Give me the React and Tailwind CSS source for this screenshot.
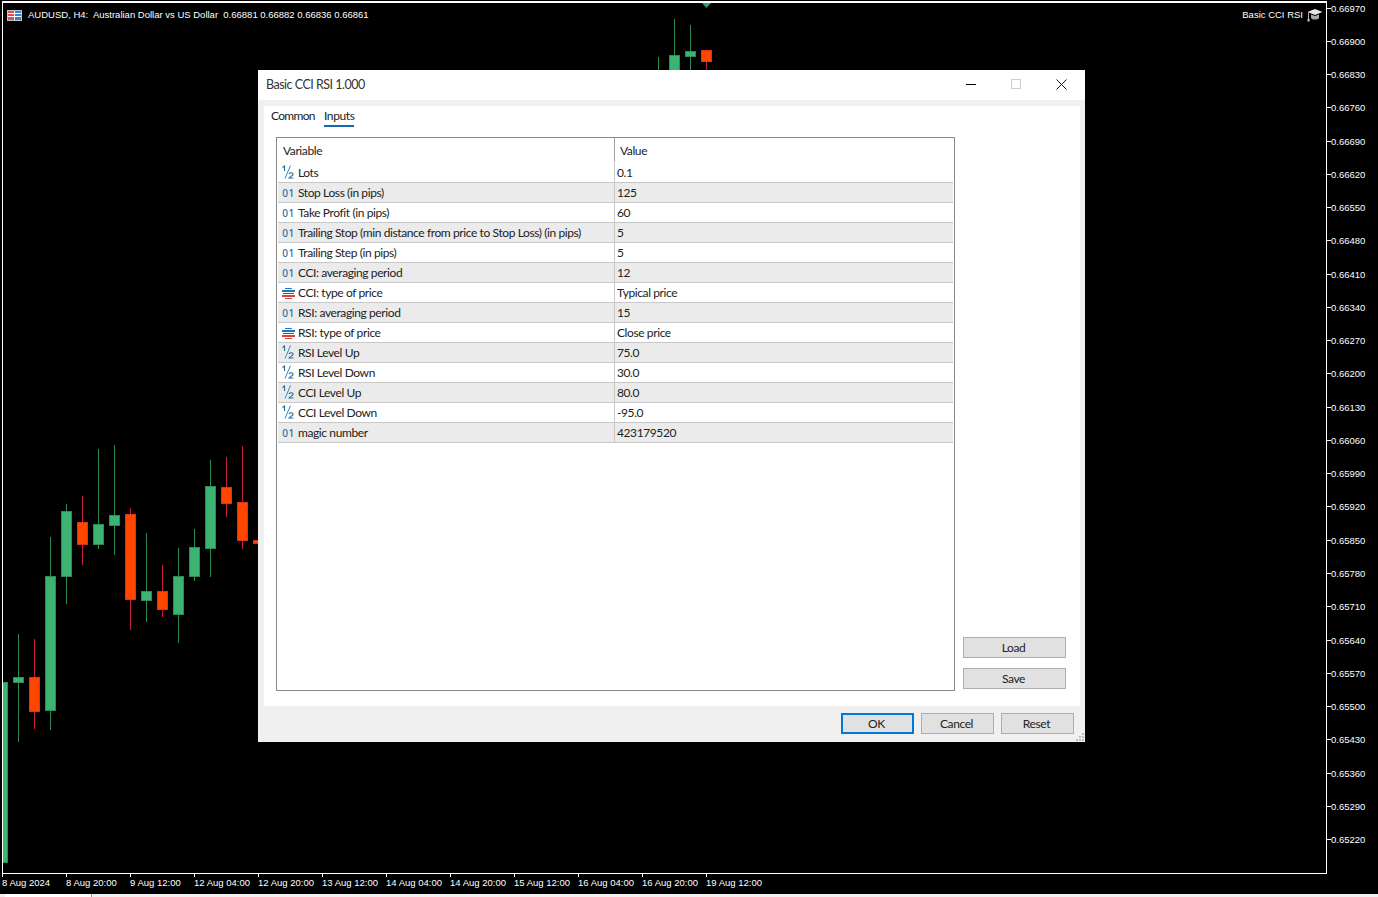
import React from "react";

const candles = [
    { x: 2.5, hi: 682, lo: 862, top: 682, bot: 862, up: true },
    { x: 18.5, hi: 634, lo: 742, top: 677, bot: 682, up: true },
    { x: 34.5, hi: 639, lo: 729, top: 677, bot: 711, up: false },
    { x: 50.5, hi: 537, lo: 730, top: 576, bot: 710, up: true },
    { x: 66.5, hi: 504, lo: 604, top: 511, bot: 576, up: true },
    { x: 82.5, hi: 496, lo: 565, top: 522, bot: 544, up: false },
    { x: 98.5, hi: 449, lo: 549, top: 524, bot: 544, up: true },
    { x: 114.5, hi: 445, lo: 555, top: 515, bot: 525, up: true },
    { x: 130.5, hi: 508, lo: 630, top: 514, bot: 599, up: false },
    { x: 146.5, hi: 533, lo: 622, top: 591, bot: 600, up: true },
    { x: 162.5, hi: 565, lo: 617, top: 591, bot: 609, up: false },
    { x: 178.5, hi: 548, lo: 643, top: 576, bot: 614, up: true },
    { x: 194.5, hi: 529, lo: 581, top: 547, bot: 576, up: true },
    { x: 210.5, hi: 460, lo: 577, top: 486, bot: 548, up: true },
    { x: 226.5, hi: 457, lo: 517, top: 487, bot: 503, up: false },
    { x: 242.5, hi: 446, lo: 549, top: 502, bot: 540, up: false },
    { x: 258.5, hi: 540, lo: 543, top: 540, bot: 543, up: false },
    { x: 658.5, hi: 57, lo: 80, top: 80, bot: 80, up: true },
    { x: 674.5, hi: 19, lo: 80, top: 55, bot: 80, up: true },
    { x: 690.5, hi: 25, lo: 80, top: 51, bot: 56, up: true },
    { x: 706.5, hi: 50, lo: 80, top: 50, bot: 61, up: false },
];

const prices = [
    "0.66970", "0.66900", "0.66830", "0.66760", "0.66690", "0.66620", "0.66550",
    "0.66480", "0.66410", "0.66340", "0.66270", "0.66200", "0.66130", "0.66060",
    "0.65990", "0.65920", "0.65850", "0.65780", "0.65710", "0.65640", "0.65570",
    "0.65500", "0.65430", "0.65360", "0.65290", "0.65220",
];

const times = [
    "8 Aug 2024", "8 Aug 20:00", "9 Aug 12:00", "12 Aug 04:00", "12 Aug 20:00",
    "13 Aug 12:00", "14 Aug 04:00", "14 Aug 20:00", "15 Aug 12:00", "16 Aug 04:00",
    "16 Aug 20:00", "19 Aug 12:00",
];

const inputs = [
    { type: "real", name: "Lots", value: "0.1" },
    { type: "int", name: "Stop Loss (in pips)", value: "125" },
    { type: "int", name: "Take Profit (in pips)", value: "60" },
    { type: "int", name: "Trailing Stop (min distance from price to Stop Loss) (in pips)", value: "5" },
    { type: "int", name: "Trailing Step (in pips)", value: "5" },
    { type: "int", name: "CCI: averaging period", value: "12" },
    { type: "enum", name: "CCI: type of price", value: "Typical price" },
    { type: "int", name: "RSI: averaging period", value: "15" },
    { type: "enum", name: "RSI: type of price", value: "Close price" },
    { type: "real", name: "RSI Level Up", value: "75.0" },
    { type: "real", name: "RSI Level Down", value: "30.0" },
    { type: "real", name: "CCI Level Up", value: "80.0" },
    { type: "real", name: "CCI Level Down", value: "-95.0" },
    { type: "int", name: "magic number", value: "423179520" },
];

function CandleChart() {
    return (
        <svg className="absolute left-[-3px] top-[-3px]" width="1378" height="897">
            {candles.map((c) => (
                <g key={c.x}>
                    <line
                        x1={c.x}
                        x2={c.x}
                        y1={c.hi}
                        y2={c.lo}
                        stroke={c.up ? "#2e8b57" : "#c41e3a"}
                    />
                    {c.bot > c.top && (
                        <rect
                            x={c.x - 5}
                            y={c.top + 0.5}
                            width="10"
                            height={c.bot - c.top}
                            fill={c.up ? "#3cb371" : "#ff4500"}
                            stroke={c.up ? "#2e8b57" : "#e0301e"}
                        />
                    )}
                </g>
            ))}
            <polygon points="702,3 711,3 706.5,8" fill="#2a9d8f" />
        </svg>
    );
}

function SymbolIcon() {
    return (
        <svg width="15" height="11" viewBox="0 0 15 11">
            <rect x="0.5" y="0.5" width="14" height="10" fill="#fff" stroke="#b9c4d6" />
            <rect x="1" y="1" width="6" height="2" fill="#e2504a" />
            <rect x="1" y="4" width="6" height="2" fill="#e2504a" />
            <rect x="1" y="7" width="6" height="3" fill="#e2504a" />
            <rect x="8" y="1" width="6" height="2" fill="#3f7fc4" />
            <rect x="8" y="4" width="6" height="2" fill="#3f7fc4" />
            <rect x="8" y="7" width="6" height="3" fill="#3f7fc4" />
        </svg>
    );
}

function CapIcon() {
    return (
        <svg width="16" height="14" viewBox="0 0 16 14">
            <path d="M8 1 L15.5 4 L8 7 L0.5 4 Z" fill="#e6e6e6" />
            <path d="M4 6.5 L8 8 L12 6.5 V10 C10.5 12 5.5 12 4 10 Z" fill="#a8a8a8" />
            <path d="M1.5 4.5 V11" stroke="#b5b5b5" />
            <rect x="0.5" y="11" width="2" height="2.5" fill="#cfcfcf" />
        </svg>
    );
}

function TypeIcon({ type }) {
    if (type === "int") {
        return (
            <span className="w-[13px] text-center font-['Noto_Sans',sans-serif] text-[10px] font-medium leading-none tracking-[0.6px] text-[#1f6f9f]">01</span>
        );
    }
    if (type === "real") {
        return (
            <svg width="13" height="14" viewBox="0 0 13 14" className="mt-[-2px]">
                <path d="M0.5 2.5 L2.5 1 V6" fill="none" stroke="#1f6f9f" strokeWidth="1.1" />
                <path d="M8.5 0.5 L3 13.5" fill="none" stroke="#3f86b0" strokeWidth="1" />
                <path d="M7 9 C8 7.2 11.5 7.5 11 9.5 C10.5 11 8 11.5 7 13 H11.5" fill="none" stroke="#1f6f9f" strokeWidth="1.1" />
            </svg>
        );
    }
    return (
        <svg width="13" height="11" viewBox="0 0 13 11" shapeRendering="crispEdges">
            <rect x="3" y="0" width="7" height="1" fill="#1f78c0" />
            <rect x="0" y="2" width="13" height="2" fill="#1f78c0" />
            <rect x="1" y="5" width="11" height="1" fill="#555555" />
            <rect x="0" y="7" width="13" height="2" fill="#d8403c" />
            <rect x="3" y="10" width="7" height="1" fill="#d8403c" />
        </svg>
    );
}

function DialogButton({ children, primary, className }) {
    return (
        <button
            className={`flex h-[21px] items-center justify-center bg-[#e1e1e1] pr-0.5 pt-px ${
                primary ? "border-2 border-[#0078d7]" : "border border-[#adadad]"
            } ${className}`}
        >
            {children}
        </button>
    );
}

function InputRow({ row, index }) {
    return (
        <div
            className={`flex h-5 border-b border-[#c8c8c8] ${
                index % 2 === 1 ? "bg-[#ebebeb]" : "bg-white"
            }`}
        >
            <div className="flex w-[337px] items-center border-r border-[#c8c8c8] pl-1 pt-px">
                <TypeIcon type={row.type} />
                <span className="ml-[3px] whitespace-nowrap">{row.name}</span>
            </div>
            <div className="flex items-center pl-[2px] pt-px">{row.value}</div>
        </div>
    );
}

function SettingsDialog() {
    return (
        <div className="absolute left-[258px] top-[70px] flex h-[672px] w-[827px] flex-col bg-[#f0f0f0] font-['Lato',sans-serif] text-[12px] tracking-[-0.4px] text-[#222]">
            {/* Title bar */}
            <div className="flex h-[30px] items-center bg-white pl-2">
                <span className="flex-1 text-[12.5px] tracking-[-0.5px] text-[#333]">Basic CCI RSI 1.000</span>
                <div className="mb-0.5 flex h-full w-[46px] items-center justify-center">
                    <div className="h-px w-[10px] bg-black" />
                </div>
                <div className="mb-0.5 flex h-full w-[44px] items-center justify-center">
                    <div className="h-[10px] w-[10px] border border-[#cccccc]" />
                </div>
                <div className="mb-0.5 flex h-full w-[47px] items-center justify-center">
                    <svg width="11" height="11" viewBox="0 0 11 11">
                        <path d="M0.5 0.5 L10.5 10.5 M10.5 0.5 L0.5 10.5" stroke="#111" fill="none" />
                    </svg>
                </div>
            </div>

            {/* Main panel */}
            <div className="ml-1.5 mr-[5px] mt-1.5 flex h-[600px] bg-white pb-[15px] pl-3 pr-3.5">
                <div className="flex w-[679px] flex-col">
                    <div className="flex h-[31px] pt-px">
                        <span className="-ml-[5px] h-5 w-[53px] leading-[17px] tracking-[-0.7px]">Common</span>
                        <span className="h-5 border-b-2 border-[#0f6cab] leading-[17px]">Inputs</span>
                    </div>
                    <div className="flex-1 border border-[#8a8a8a] px-px">
                        <div className="flex h-6 items-center bg-white">
                            <div className="flex h-full w-[337px] items-center border-r border-[#a0a0a0] pl-[5px] pt-px">Variable</div>
                            <div className="pl-[5px] pt-px">Value</div>
                        </div>
                        <div className="mt-px">
                            {inputs.map((row, index) => (
                                <InputRow key={row.name} row={row} index={index} />
                            ))}
                        </div>
                    </div>
                </div>
                <div className="ml-2 flex flex-1 flex-col justify-end gap-2.5 pb-[2px]">
                    <DialogButton className="w-full">Load</DialogButton>
                    <DialogButton className="w-full">Save</DialogButton>
                </div>
            </div>

            {/* Footer buttons */}
            <div className="flex flex-1 justify-end gap-[7px] pr-[11px] pt-[7px]">
                <DialogButton primary className="w-[73px]">OK</DialogButton>
                <DialogButton className="w-[73px]">Cancel</DialogButton>
                <DialogButton className="w-[73px]">Reset</DialogButton>
            </div>

            {/* Resize grip */}
            <svg className="absolute bottom-px right-px" width="9" height="9" viewBox="0 0 9 9">
                <path d="M7 1h2v2h-2z M4 4h2v2h-2z M7 4h2v2h-2z M1 7h2v2h-2z M4 7h2v2h-2z M7 7h2v2h-2z" fill="#bdbdbd" />
            </svg>
        </div>
    );
}

export default function App() {
    return (
        <div className="relative flex h-[897px] w-[1378px] flex-col overflow-hidden bg-black font-['Liberation_Sans',sans-serif] text-[9.5px] text-white">
            <div className="flex h-[874px]">
                {/* Chart window */}
                <div className="relative ml-[2px] mt-px w-[1325px] overflow-hidden border-b border-l border-r border-t-2 border-white">
                    <CandleChart />
                    <div className="absolute left-1 top-[6px] flex items-center gap-[6px] whitespace-pre leading-3">
                        <SymbolIcon />
                        <span>AUDUSD, H4:  Australian Dollar vs US Dollar  0.66881 0.66882 0.66836 0.66861</span>
                    </div>
                    <div className="absolute right-[3px] top-[5px] flex items-center gap-1 leading-3">
                        <span>Basic CCI RSI</span>
                        <CapIcon />
                    </div>
                </div>

                {/* Price axis */}
                <div className="flex flex-1 flex-col gap-[21.28px] pt-[2px]">
                    {prices.map((price) => (
                        <div key={price} className="flex h-3 items-center">
                            <div className="h-px w-1 bg-white" />
                            <span className="mt-px leading-3">{price}</span>
                        </div>
                    ))}
                </div>
            </div>

            {/* Time axis */}
            <div className="ml-[2px] flex h-5">
                {times.map((time) => (
                    <div key={time} className="w-16">
                        <div className="h-[3px] w-px bg-white" />
                        <div className="whitespace-nowrap leading-3">{time}</div>
                    </div>
                ))}
            </div>

            {/* Bottom tab strip */}
            <div className="flex h-[3px] bg-[#f0f0f0]">
                <div className="ml-[5px] w-[86px] bg-white" />
                <div className="w-px bg-[#9a9a9a]" />
            </div>

            <SettingsDialog />
        </div>
    );
}
